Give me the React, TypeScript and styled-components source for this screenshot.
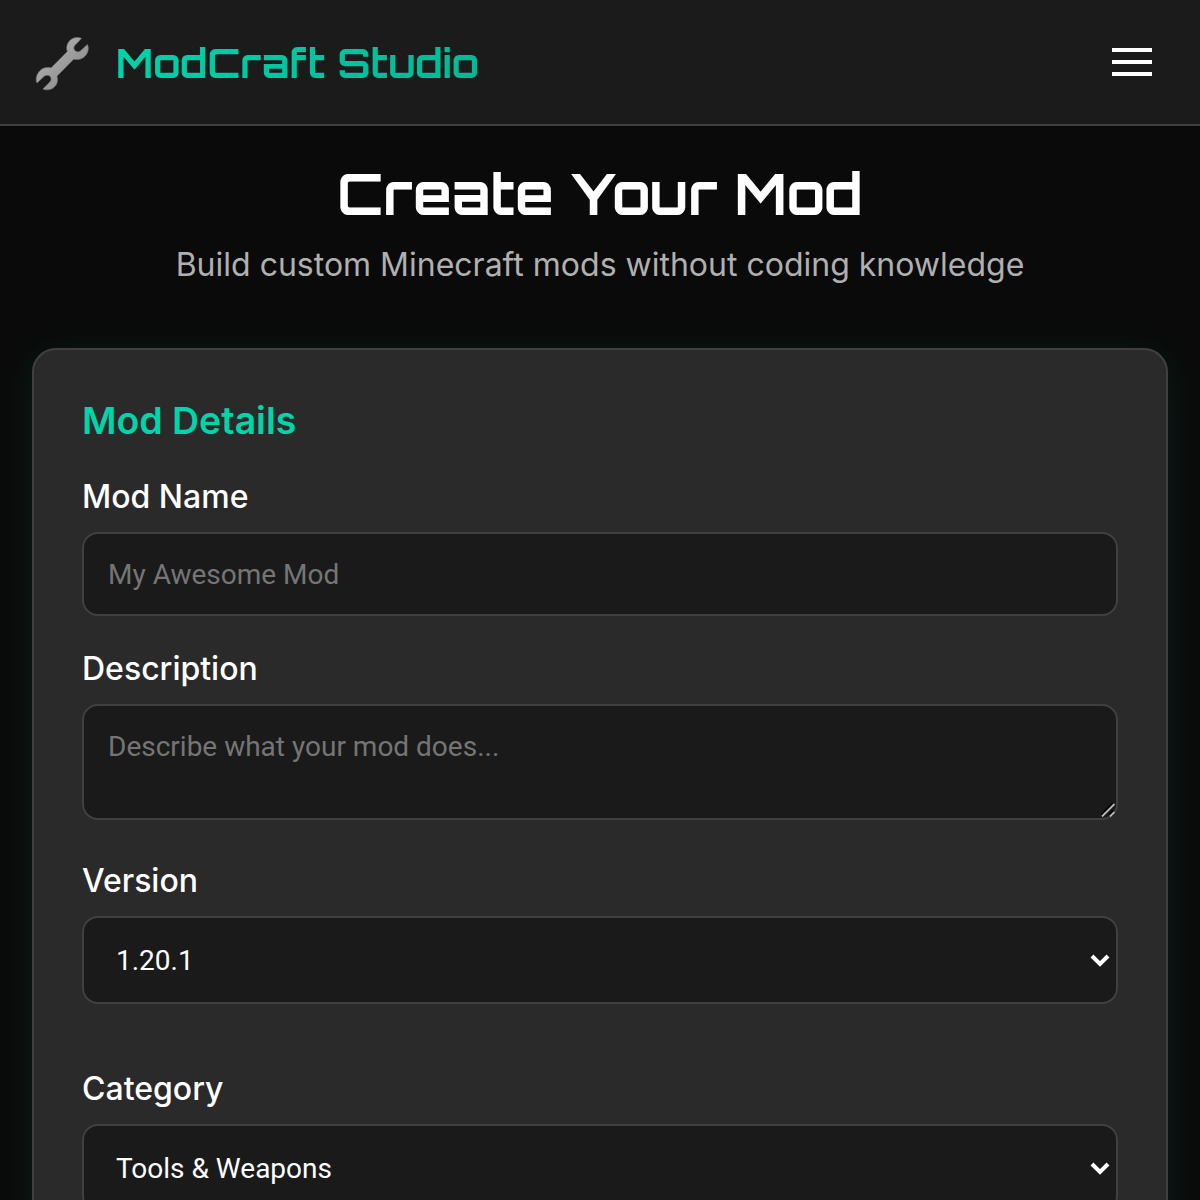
import React from "react";
import styled, { createGlobalStyle } from "styled-components";

const GlobalStyle = createGlobalStyle`
  *, *::before, *::after { box-sizing: border-box; }
  html, body { margin: 0; background: #0a0a0a; }
  body {
    height: 1200px;
    overflow: hidden;
    color: #ffffff;
    font-family: Inter, "Liberation Sans", sans-serif;
  }
`;

const Page = styled.div`
  height: 1200px;
  overflow: hidden;
`;

const Header = styled.header`
  display: flex;
  align-items: center;
  justify-content: space-between;
  height: 126px;
  padding: 0 48px 0 32px;
  background: #1b1b1b;
  border-bottom: 2px solid #404040;
`;

const Brand = styled.div`
  display: flex;
  align-items: center;
  gap: 24px;
`;

const WrenchIcon = styled.svg`
  width: 60px;
  height: 60px;
`;

const display = `
  display: inline-block;
  font-family: Orbitron, "DejaVu Sans", sans-serif;
  font-weight: 700;
  white-space: nowrap;
`;

const BrandName = styled.span`
  ${display}
  padding-top: 2px;
  font-size: 40px;
  line-height: 60px;
  background: linear-gradient(135deg, #00d4aa, #00b894);
  background-clip: text;
  -webkit-background-clip: text;
  color: transparent;
`;

const MenuButton = styled.button`
  display: flex;
  flex-direction: column;
  gap: 8px;
  padding: 0;
  border: 0;
  background: none;
`;

const MenuBar = styled.span`
  width: 40px;
  height: 4px;
  background: #ffffff;
`;

const Main = styled.main`
  padding: 32px;
`;

const Intro = styled.section`
  display: flex;
  flex-direction: column;
  align-items: center;
  height: 190px;
`;

const Title = styled.h1`
  ${display}
  margin: 0;
  font-size: 56px;
  line-height: 72px;
`;

const Subtitle = styled.p`
  margin: 9px 0 0;
  color: #b0b0b0;
  font-size: 32px;
  line-height: 52px;
`;

const Card = styled.form`
  height: 1200px;
  padding: 48px;
  background: #2a2a2a;
  border: 2px solid #404040;
  border-radius: 24px;
  box-shadow: 0 8px 40px rgba(0, 212, 170, 0.1);
`;

const SectionTitle = styled.h3`
  margin: 0 0 28px;
  color: #00d4aa;
  font-size: 37.44px;
  font-weight: 600;
  line-height: 46px;
`;

const Field = styled.div<{ $gap: number }>`
  display: flex;
  flex-direction: column;
  margin-bottom: ${({ $gap }) => $gap}px;
`;

const Label = styled.label`
  margin: -2px 0 8px;
  font-size: 32px;
  font-weight: 500;
  line-height: 54px;
`;

const control = `
  display: block;
  width: 100%;
  margin: 0;
  background: #1a1a1a;
  border: 2px solid #404040;
  border-radius: 16px;
  color: #ffffff;
  font-family: Roboto, sans-serif;
  font-size: 28px;
  outline: none;
  &::placeholder { color: #757575; opacity: 1; }
`;

const TextInput = styled.input`
  ${control}
  height: 84px;
  padding: 0 24px;
`;

const TextArea = styled.textarea`
  ${control}
  height: 116px;
  padding: 24px;
  line-height: 33px;
  resize: none;
`;

const Overlay = styled.div`
  position: relative;
`;

const Grip = styled.svg`
  position: absolute;
  right: 2px;
  bottom: 2px;
  width: 15px;
  height: 15px;
`;

const Select = styled.select`
  ${control}
  height: 88px;
  padding: 0 32px;
  appearance: none;
`;

const Chevron = styled.svg`
  position: absolute;
  top: 37px;
  right: 7px;
  width: 22px;
  height: 16px;
  pointer-events: none;
`;

function SelectBox({ id, value }: { id: string; value: string }) {
  return (
    <Overlay>
      <Select id={id} defaultValue={value}>
        <option>{value}</option>
      </Select>
      <Chevron viewBox="0 0 22 16">
        <path d="M3 3 11 11 19 3" fill="none" stroke="#fff" strokeWidth="4" />
      </Chevron>
    </Overlay>
  );
}

export default function App() {
  return (
    <Page>
      <GlobalStyle />
      <Header>
        <Brand>
          <WrenchIcon viewBox="0 0 60 60" aria-label="Wrench">
            <defs>
              <linearGradient id="steel" x1="0" y1="0" x2="1" y2="1">
                <stop offset="0.3" stopColor="#a9a9a9" />
                <stop offset="0.7" stopColor="#929292" />
              </linearGradient>
            </defs>
            <path
              d="M49.5 6.4C44.8 4.3 39 6 36.3 10.5C34.6 13.2 34.2 16.5 35.3 19.6L19 35.9C14.2 34.6 9 36.4 6.4 40.6C3.9 44.5 3.6 48.3 5 51L12.2 44.3C14.3 42.8 16.7 42.9 18.2 44.6C19.6 46.2 19.3 48.2 18 49.8L10.9 57C15.5 59 21.2 57.5 24 53C25.8 50.2 26 47.1 25 44.2L41.6 27.2C46.6 28.5 51.9 26.6 54.5 22.3C56.7 18.7 56.8 15.4 55.4 12.5L48.4 18.9C46.5 20.3 44.3 20.1 42.9 18.6C41.5 17 41.6 14.9 43 13.3Z"
              fill="url(#steel)"
              stroke="#777"
              strokeWidth="0.6"
            />
          </WrenchIcon>
          <BrandName>ModCraft Studio</BrandName>
        </Brand>
        <MenuButton type="button" aria-label="Menu">
          <MenuBar />
          <MenuBar />
          <MenuBar />
        </MenuButton>
      </Header>
      <Main>
        <Intro>
          <Title>Create Your Mod</Title>
          <Subtitle>Build custom Minecraft mods without coding knowledge</Subtitle>
        </Intro>
        <Card>
          <SectionTitle>Mod Details</SectionTitle>
          <Field $gap={28}>
            <Label htmlFor="name">Mod Name</Label>
            <TextInput id="name" placeholder="My Awesome Mod" />
          </Field>
          <Field $gap={36}>
            <Label htmlFor="description">Description</Label>
            <Overlay>
              <TextArea id="description" placeholder="Describe what your mod does..." />
              <Grip viewBox="0 0 15 15">
                <path d="M1 12.5 13 .5M9 12.5 13 8.5" stroke="#000" strokeWidth="4" />
                <path d="M1 13.5 13.5 1M9 13.5 13.5 9" stroke="#bbb" strokeWidth="1.8" />
              </Grip>
            </Overlay>
          </Field>
          <Field $gap={60}>
            <Label htmlFor="version">Version</Label>
            <SelectBox id="version" value="1.20.1" />
          </Field>
          <Field $gap={60}>
            <Label htmlFor="category">Category</Label>
            <SelectBox id="category" value="Tools & Weapons" />
          </Field>
        </Card>
      </Main>
    </Page>
  );
}
